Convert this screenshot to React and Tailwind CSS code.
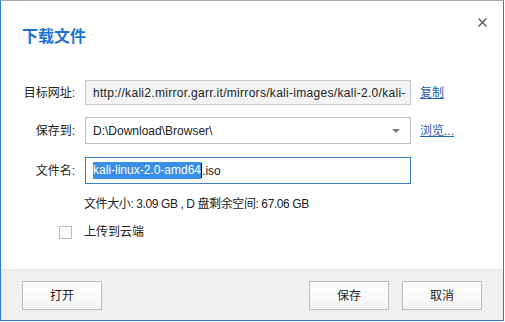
import React from "react";

const FONT = "font-['Liberation_Sans','Noto_Sans_CJK_SC',sans-serif]";

function Btn({ children }) {
  return (
    <button className="w-[80px] h-[29px] border border-[#bcbcbc] bg-gradient-to-b from-white to-[#f4f4f4] text-[12px] text-[#222] flex items-center justify-center">
      {children}
    </button>
  );
}

export default function App() {
  return (
    <div className={`${FONT} w-[504px] h-[321px] flex flex-col bg-white border-x border-b border-[#2a7ad6] border-t border-t-[#a9a9a9] text-[12px] text-[#222]`}>
      <div className="relative flex-1 flex flex-col">
        <button className="absolute right-[16px] top-[17px] w-[9px] h-[9px]">
          <svg width="9" height="9" viewBox="0 0 9 9" className="block">
            <path d="M0.5 0.5 L8.5 8.5 M8.5 0.5 L0.5 8.5" stroke="#555" strokeWidth="1.3" />
          </svg>
        </button>
        <div className="mt-[24px] ml-[21px] h-[24px] leading-[24px] text-[16px] font-bold text-[#1d72d8]">下载文件</div>

        <div className="mt-[31px] flex items-center">
          <div className="w-[74px] text-right">目标网址:</div>
          <div className="ml-[10px] w-[326px] h-[25px] border border-[#c8c8c8] bg-[#f3f3f3] pl-[7px] pr-[6px] flex items-center">
            <span className="tracking-[0.3px] whitespace-nowrap">http://kali2.mirror.garr.it/mirrors/kali-images/kali-2.0/kali-</span>
          </div>
          <a className="ml-[9px] text-[#2360b5] underline">复制</a>
        </div>

        <div className="mt-[12px] flex items-center">
          <div className="w-[74px] text-right">保存到:</div>
          <div className="ml-[10px] w-[326px] h-[27px] border border-[#bdbdbd] bg-white pl-[7px] pr-[8px] flex items-center justify-between">
            <span>D:\Download\Browser\</span>
            <svg width="8" height="4" viewBox="0 0 8 4" className="mr-[2px]">
              <path d="M0 0 L8 0 L4 4 Z" fill="#7a7a7a" />
            </svg>
          </div>
          <a className="ml-[9px] text-[#2360b5] underline">浏览...</a>
        </div>

        <div className="mt-[13px] flex items-center">
          <div className="w-[74px] text-right">文件名:</div>
          <div className="ml-[10px] w-[326px] h-[27px] border border-[#3a7fc8] bg-white pl-[7px] flex items-center">
            <span className="bg-[#3a8ee6] text-white leading-[17px]">kali-linux-2.0-amd64</span>
            <span className="w-[1px] h-[15px] bg-black"></span>
            <span>.iso</span>
          </div>
        </div>

        <div className="mt-[11px] ml-[83px] h-[18px] leading-[18px] tracking-[-0.4px]">文件大小: 3.09 GB , D 盘剩余空间: 67.06 GB</div>

        <div className="mt-[10px] ml-[58px] h-[18px] flex items-center">
          <span className="w-[13px] h-[13px] border border-[#b9b9b9] bg-white"></span>
          <span className="ml-[12px]">上传到云端</span>
        </div>
      </div>

      <div className="h-[51px] border-t border-[#e4e4e4] bg-[#f0f0f0] flex items-start pt-[11px] px-[21px]">
        <Btn>打开</Btn>
        <div className="flex-1"></div>
        <Btn>保存</Btn>
        <div className="w-[13px]"></div>
        <Btn>取消</Btn>
      </div>
    </div>
  );
}
